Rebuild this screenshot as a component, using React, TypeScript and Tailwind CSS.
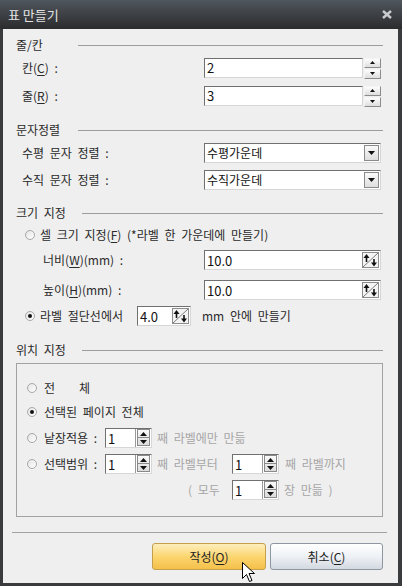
import React from "react";

const FONT = "font-['Noto_Sans_CJK_KR','Noto_Sans',sans-serif]";
const SUNKEN =
  "bg-white border border-t-[#707070] border-l-[#707070] border-b-[#d6d6d6] border-r-[#d6d6d6]";

function Header({ label, lw }: { label: string; lw: string }) {
  return (
    <div className="flex h-[16px] items-center">
      <div className={`${lw} shrink-0 text-[12px] leading-[16px] text-[#2a2a2a]`}>{label}</div>
      <div className="h-px flex-1 bg-[#9c9c9c]" />
    </div>
  );
}

function Tri({ down }: { down?: boolean }) {
  return (
    <svg width="5" height="3" viewBox="0 0 5 3">
      {down ? <polygon points="0,0 5,0 2.5,3" fill="#111" /> : <polygon points="0,3 5,3 2.5,0" fill="#111" />}
    </svg>
  );
}

function SmallSpin() {
  const btn =
    "flex h-[10px] w-[17px] items-center justify-center bg-gradient-to-b from-[#fdfdfd] to-[#dedede] border border-t-[#f4f4f4] border-l-[#f4f4f4] border-b-[#8c8c8c] border-r-[#8c8c8c]";
  return (
    <div className="ml-[1px] flex flex-col gap-px">
      <div className={btn}>
        <Tri />
      </div>
      <div className={btn}>
        <Tri down />
      </div>
    </div>
  );
}

function DiagSpin() {
  return (
    <svg width="17" height="16" viewBox="0 0 17 16" className="shrink-0">
      <rect x="0.5" y="0.5" width="16" height="15" fill="#f4f4f4" stroke="#8c8c8c" />
      <line x1="1" y1="15" x2="16" y2="1" stroke="#7a7a7a" strokeWidth="1" />
      <line x1="4.5" y1="4" x2="4.5" y2="10" stroke="#111" strokeWidth="1.6" />
      <polygon points="1.5,6 4.5,2 7.5,6" fill="#111" />
      <line x1="12" y1="7" x2="12" y2="12" stroke="#111" strokeWidth="1.6" />
      <polygon points="9,10.5 12,14.5 15,10.5" fill="#111" />
    </svg>
  );
}

function StackSpin() {
  return (
    <div className="flex h-[18px] w-[15px] shrink-0 flex-col border-l border-[#9a9a9a] pl-[1px]">
      <div className="flex h-[17px] w-[13px] flex-col border border-[#8a8a8a] bg-gradient-to-b from-[#fafafa] to-[#dcdcdc]">
        <div className="flex flex-1 items-center justify-center border-b border-[#8a8a8a]">
          <svg width="7" height="4" viewBox="0 0 7 4">
            <polygon points="0,4 7,4 3.5,0" fill="#111" />
          </svg>
        </div>
        <div className="flex flex-1 items-center justify-center">
          <svg width="7" height="4" viewBox="0 0 7 4">
            <polygon points="0,0 7,0 3.5,4" fill="#111" />
          </svg>
        </div>
      </div>
    </div>
  );
}

function NumBox({ value }: { value: string }) {
  return (
    <div className={`${SUNKEN} flex h-[20px] w-[47px] shrink-0 items-center justify-between pr-px`}>
      <span className="pl-[2px] text-[13px] leading-none text-[#111]">{value}</span>
      <StackSpin />
    </div>
  );
}

function Radio({ checked }: { checked?: boolean }) {
  return (
    <div className="flex h-[10px] w-[10px] shrink-0 items-center justify-center rounded-full border border-[#a8a8a8] bg-gradient-to-br from-[#e4e4e4] to-[#ffffff]">
      {checked && <div className="h-[4px] w-[4px] rounded-full bg-[#111]" />}
    </div>
  );
}

function Select({ value }: { value: string }) {
  return (
    <div className={`${SUNKEN} flex h-[20px] w-[177px] items-center justify-between pr-px`}>
      <span className="pl-[2px] text-[12px] leading-none text-[#111]">{value}</span>
      <div className="flex h-[16px] w-[15px] items-center justify-center border border-[#8a8a8a] bg-gradient-to-b from-[#fafafa] to-[#dedede]">
        <svg width="7" height="4" viewBox="0 0 7 4">
          <polygon points="0,0 7,0 3.5,4" fill="#111" />
        </svg>
      </div>
    </div>
  );
}

function U({ c }: { c: string }) {
  return <span className="underline underline-offset-2">{c}</span>;
}

export default function App() {
  return (
    <div className={`${FONT} relative h-[586px] w-[402px] overflow-hidden bg-[#3a3b3d]`}>
      {/* title bar */}
      <div className="flex h-[29px] items-center justify-between bg-gradient-to-b from-[#50565e] to-[#2b2c2d] pl-[8px] pr-[10px]">
        <span className="text-[13px] leading-none text-[#e4e4e4]">표 만들기</span>
        <svg width="10" height="9" viewBox="0 0 10 9">
          <line x1="1" y1="1" x2="9" y2="8" stroke="#c9cbce" strokeWidth="2.4" />
          <line x1="9" y1="1" x2="1" y2="8" stroke="#c9cbce" strokeWidth="2.4" />
        </svg>
      </div>

      {/* body */}
      <div className="ml-[3px] mr-[4px] h-[554px] bg-[#efefef] pl-[13px] pr-[15px] pt-[8px] text-[12px] text-[#2a2a2a] [word-spacing:3px]">
        <Header label="줄/칸" lw="w-[62px]" />
        <div className="mt-[5px] flex h-[20px] items-center pl-[6px]">
          <div className="w-[182px] shrink-0 leading-none">
            칸(<U c="C" />) :
          </div>
          <div className={`${SUNKEN} flex h-[20px] w-[159px] items-center pl-[2px] text-[13px] text-[#111]`}>2</div>
          <SmallSpin />
        </div>
        <div className="mt-[8px] flex h-[20px] items-center pl-[6px]">
          <div className="w-[182px] shrink-0 leading-none">
            줄(<U c="R" />) :
          </div>
          <div className={`${SUNKEN} flex h-[20px] w-[159px] items-center pl-[2px] text-[13px] text-[#111]`}>3</div>
          <SmallSpin />
        </div>

        <div className="mt-[16px]">
          <Header label="문자정렬" lw="w-[62px]" />
        </div>
        <div className="mt-[5px] flex h-[20px] items-center pl-[6px]">
          <div className="w-[182px] shrink-0 leading-none">수평 문자 정렬 :</div>
          <Select value="수평가운데" />
        </div>
        <div className="mt-[7px] flex h-[20px] items-center pl-[6px]">
          <div className="w-[182px] shrink-0 leading-none">수직 문자 정렬 :</div>
          <Select value="수직가운데" />
        </div>

        <div className="mt-[15px]">
          <Header label="크기 지정" lw="w-[66px]" />
        </div>
        <div className="mt-[6px] flex h-[16px] items-center gap-[5px] pl-[9px]">
          <Radio />
          <span className="leading-none">
            셀 크기 지정(<U c="F" />) (*라벨 한 가운데에 만들기)
          </span>
        </div>
        <div className="mt-[7px] flex h-[20px] items-center pl-[27px]">
          <div className="w-[161px] shrink-0 leading-none">
            너비(<U c="W" />)(mm) :
          </div>
          <div className={`${SUNKEN} flex h-[20px] w-[177px] items-center justify-between pr-px`}>
            <span className="pl-[2px] text-[13px] leading-none text-[#111]">10.0</span>
            <DiagSpin />
          </div>
        </div>
        <div className="mt-[10px] flex h-[20px] items-center pl-[27px]">
          <div className="w-[161px] shrink-0 leading-none">
            높이(<U c="H" />)(mm) :
          </div>
          <div className={`${SUNKEN} flex h-[20px] w-[177px] items-center justify-between pr-px`}>
            <span className="pl-[2px] text-[13px] leading-none text-[#111]">10.0</span>
            <DiagSpin />
          </div>
        </div>
        <div className="mt-[6px] flex h-[20px] items-center pl-[9px]">
          <Radio checked />
          <span className="ml-[5px] w-[97px] shrink-0 leading-none">라벨 절단선에서</span>
          <div className={`${SUNKEN} flex h-[20px] w-[54px] items-center justify-between pr-px`}>
            <span className="pl-[2px] text-[13px] leading-none text-[#111]">4.0</span>
            <DiagSpin />
          </div>
          <span className="ml-[11px] leading-none">mm 안에 만들기</span>
        </div>

        <div className="mt-[16px]">
          <Header label="위치 지정" lw="w-[66px]" />
        </div>
        <div className="mt-[5px] h-[154px] border border-[#a2a2a2] pl-[10px] pt-[16px]">
          <div className="flex h-[16px] items-center">
            <Radio />
            <span className="ml-[7px] leading-none">
              전<span className="ml-[24px]">체</span>
            </span>
          </div>
          <div className="mt-[8px] flex h-[16px] items-center">
            <Radio checked />
            <span className="ml-[7px] leading-none">선택된 페이지 전체</span>
          </div>
          <div className="mt-[8px] flex h-[20px] items-center">
            <Radio />
            <span className="ml-[7px] w-[61px] shrink-0 leading-none">낱장적용 :</span>
            <NumBox value="1" />
            <span className="ml-[5px] leading-none text-[#a6a6a6]">째 라벨에만 만듦</span>
          </div>
          <div className="mt-[6px] flex h-[20px] items-center">
            <Radio />
            <span className="ml-[7px] w-[61px] shrink-0 leading-none">선택범위 :</span>
            <NumBox value="1" />
            <span className="ml-[5px] w-[75px] shrink-0 leading-none text-[#a6a6a6]">째 라벨부터</span>
            <NumBox value="1" />
            <span className="ml-[6px] leading-none text-[#a6a6a6]">째 라벨까지</span>
          </div>
          <div className="mt-[6px] flex h-[20px] items-center">
            <span className="ml-[161px] w-[44px] shrink-0 leading-none text-[#a6a6a6]">( 모두</span>
            <NumBox value="1" />
            <span className="ml-[5px] leading-none text-[#a6a6a6]">장 만듦 )</span>
          </div>
        </div>

        <div className="-mr-[4px] -ml-[4px] mt-[15px] h-px bg-[#a2a2a2]" />

        <div className="mt-[10px] flex justify-end gap-[4px]">
          <div className="flex h-[27px] w-[114px] items-center justify-center rounded-[3px] border border-[#c4a04c] bg-gradient-to-b from-[#fdeebb] via-[#fcd66f] to-[#f4c04a] leading-none text-[#222]">
            작성(<U c="O" />)
          </div>
          <div className="flex h-[27px] w-[113px] items-center justify-center rounded-[3px] border border-[#8e96a2] bg-gradient-to-b from-[#ffffff] via-[#eef1f5] to-[#d3d9e1] leading-none text-[#222]">
            취소(<U c="C" />)
          </div>
        </div>
      </div>

      {/* mouse cursor */}
      <svg className="absolute left-[242px] top-[562px]" width="13" height="21" viewBox="0 0 13 21">
        <polygon
          points="0.5,0.5 0.5,16.5 4.5,12.5 7.5,19.5 10,18.5 7,11.5 12.5,11.5"
          fill="#fff"
          stroke="#000"
          strokeWidth="1"
          strokeLinejoin="round"
        />
      </svg>
    </div>
  );
}
